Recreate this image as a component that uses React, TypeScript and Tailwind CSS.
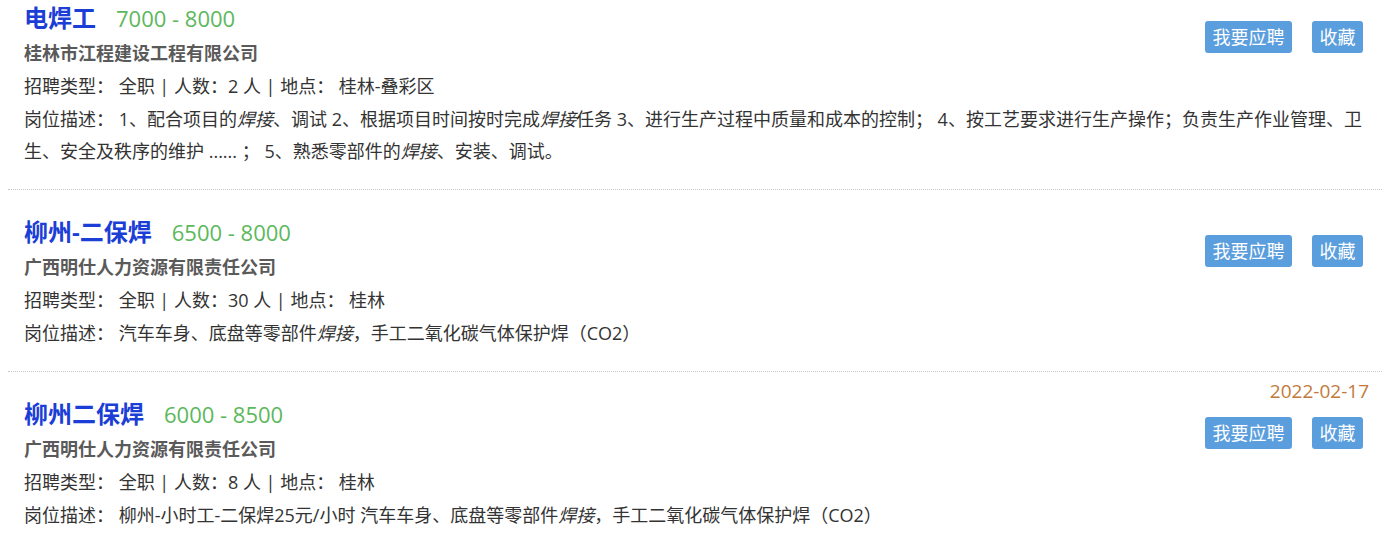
import type { ReactNode } from "react";

type Job = {
  id: number;
  title: string;
  salary: string;
  company: string;
  count: string;
  place: string;
  date?: string;
  desc: ReactNode;
};

const Weld = () => <em>焊接</em>;

const JOBS: Job[] = [
  {
    id: 1,
    title: "电焊工",
    salary: "7000 - 8000",
    company: "桂林市江程建设工程有限公司",
    count: "2",
    place: "桂林-叠彩区",
    desc: (
      <>
        1、配合项目的<Weld />、调试 2、根据项目时间按时完成<Weld />任务 3、进行生产过程中质量和成本的控制； 4、按工艺要求进行生产操作；负责生产作业管理、卫生、安全及秩序的维护 ...... ； 5、熟悉零部件的<Weld />、安装、调试。
      </>
    ),
  },
  {
    id: 2,
    title: "柳州-二保焊",
    salary: "6500 - 8000",
    company: "广西明仕人力资源有限责任公司",
    count: "30",
    place: "桂林",
    desc: (
      <>
        汽车车身、底盘等零部件<Weld />，手工二氧化碳气体保护焊（CO2）
      </>
    ),
  },
  {
    id: 3,
    title: "柳州二保焊",
    salary: "6000 - 8500",
    company: "广西明仕人力资源有限责任公司",
    count: "8",
    place: "桂林",
    date: "2022-02-17",
    desc: (
      <>
        柳州-小时工-二保焊25元/小时 汽车车身、底盘等零部件<Weld />，手工二氧化碳气体保护焊（CO2）
      </>
    ),
  },
];

function JobItem({ job }: { job: Job }) {
  return (
    <li className="ml-2 pl-4 pr-[13px] pb-[22px] border-b border-dotted border-[#c8c8c8]">
      <div className="flex justify-between">
        {/* left: title, company, meta */}
        <div className="pt-[26px]">
          <div className="flex items-baseline h-[32px] leading-[32px]">
            <span className="text-[24px] font-bold text-[#1b3ed6]">{job.title}</span>
            <span className="ml-5 text-[22px] text-[#5cb85c]">{job.salary}</span>
          </div>
          <p className="mt-[2px] h-[34px] text-[18px] leading-[34px] font-bold text-[#5a5a5a]">
            {job.company}
          </p>
          <p className="h-[33px] text-[18px] leading-[33px] text-[#333]">
            招聘类型： 全职 | 人数：{job.count} 人 | 地点： {job.place}
          </p>
        </div>

        {/* right: date + actions */}
        <div className={`flex flex-col items-end ${job.date ? "pt-[5px]" : "pt-[45px]"}`}>
          {job.date && (
            <span className="h-[28px] text-[19px] leading-[28px] text-[#c27a3c]">{job.date}</span>
          )}
          <div className={`flex gap-5 mr-[6px] ${job.date ? "mt-[12px]" : ""}`}>
            <button
              type="button"
              className="h-[32px] px-[7.5px] rounded-[3px] bg-[#5b9edd] text-white text-[18px] leading-[32px]"
            >
              我要应聘
            </button>
            <button
              type="button"
              className="h-[32px] px-[7.5px] rounded-[3px] bg-[#5b9edd] text-white text-[18px] leading-[32px]"
            >
              收藏
            </button>
          </div>
        </div>
      </div>

      <p className="text-[18px] leading-[32px] text-[#333]">
        岗位描述： {job.desc}
      </p>
    </li>
  );
}

export default function App() {
  return (
    <div
      className="min-h-screen bg-white overflow-hidden"
      style={{ fontFamily: '"Open Sans", "Noto Sans CJK SC", sans-serif' }}
    >
      <ul className="-mt-[24px]">
        {JOBS.map((job) => (
          <JobItem key={job.id} job={job} />
        ))}
      </ul>
    </div>
  );
}
